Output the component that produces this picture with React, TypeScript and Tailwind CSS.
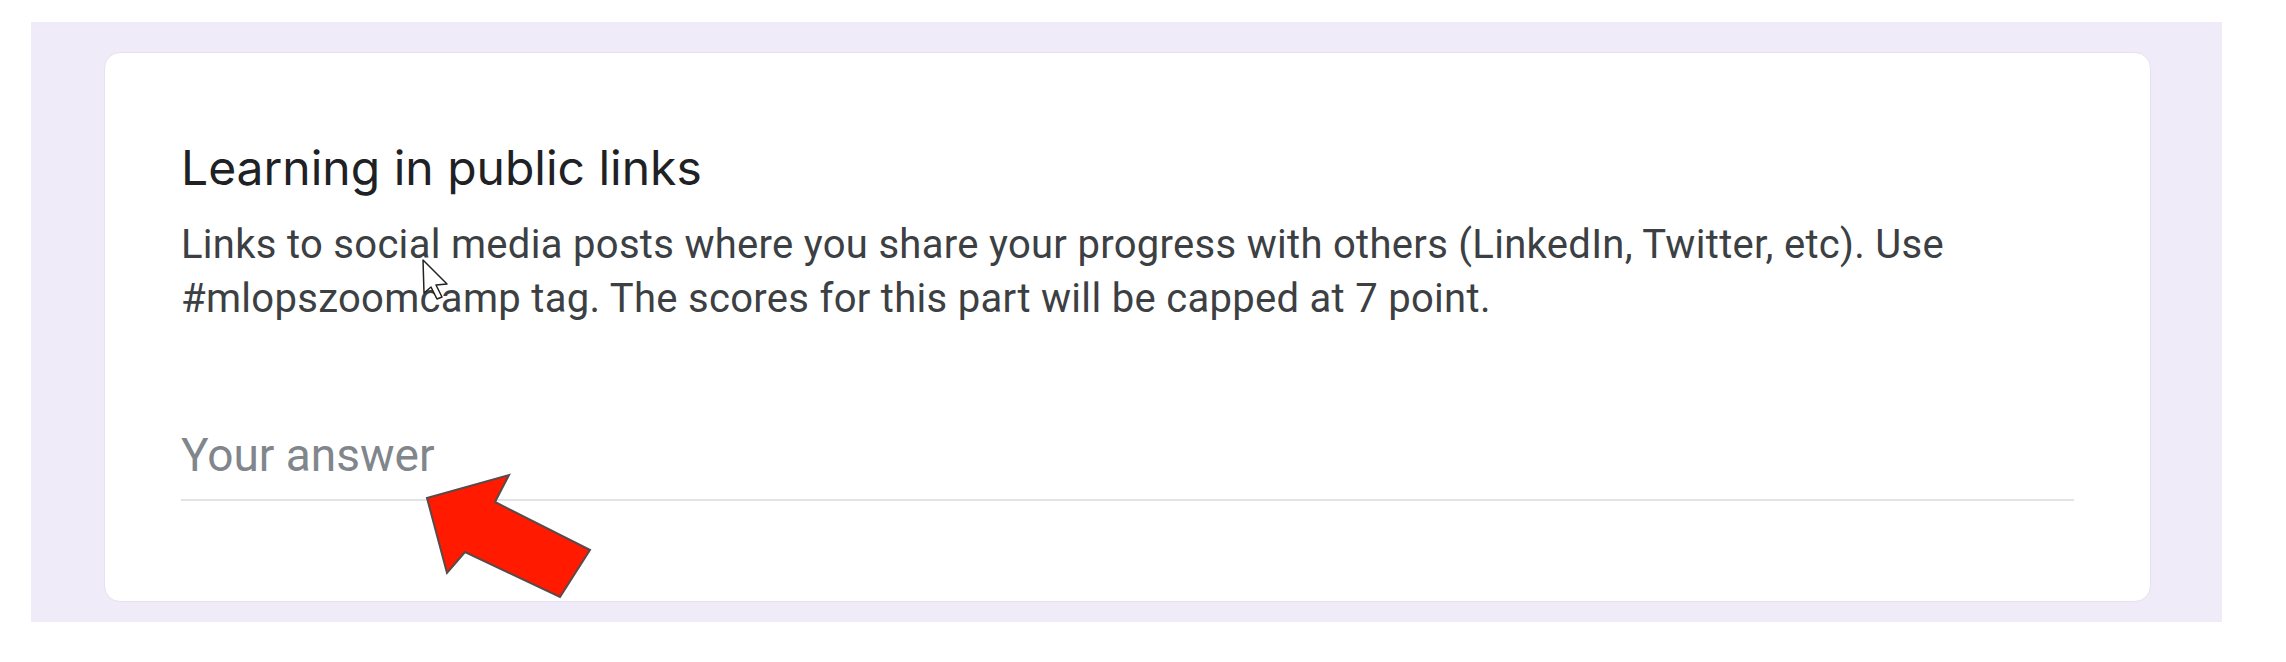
import React from "react";

export default function App() {
  return (
    <div className="relative w-[2286px] h-[662px] bg-white overflow-hidden">
      <div className="absolute left-0 top-0 w-full h-full">
        <div className="ml-[31px] mt-[22px] w-[2191px] h-[600px] bg-[#f0ebf8] pl-[73px] pr-[71px] pt-[30px] pb-[20px]">
          <div className="w-full h-full bg-white rounded-[16px] border border-[#e6e1ee] pl-[76px] pr-[76px] pt-[85px]">
            <div
              className="text-[48px] leading-[60px] text-[#202124]"
              style={{ fontFamily: "Inter, 'Noto Sans', sans-serif" }}
            >
              Learning in public links
            </div>
            <div
              className="mt-[20px] text-[40px] leading-[54px] tracking-[0.3px] text-[#3c4043] whitespace-nowrap"
              style={{ fontFamily: "Roboto, 'Liberation Sans', sans-serif" }}
            >
              Links to social media posts where you share your progress with others (LinkedIn, Twitter, etc). Use
              <br />
              #mlopszoomcamp tag. The scores for this part will be capped at 7 point.
            </div>
            <div
              className="mt-[103px] text-[46px] leading-[52px] text-[#80868b]"
              style={{ fontFamily: "Roboto, 'Liberation Sans', sans-serif" }}
            >
              Your answer
            </div>
            <div className="mt-[18px] h-[2px] bg-[#e3e3e3]" />
          </div>
        </div>
      </div>
      <svg className="absolute left-0 top-0" width="2286" height="662" viewBox="0 0 2286 662">
        <polygon
          points="427,498 509,475 495,502 590,550 560,597 465,552 447,573"
          fill="#ff1a00"
          stroke="#5a4a48"
          strokeWidth="2"
          strokeLinejoin="miter"
        />
        <polygon
          points="423,260 424,293 431,287 437,299 442,297 436,285 447,284"
          fill="#ffffff"
          stroke="#222222"
          strokeWidth="1.5"
          strokeLinejoin="round"
        />
      </svg>
    </div>
  );
}
